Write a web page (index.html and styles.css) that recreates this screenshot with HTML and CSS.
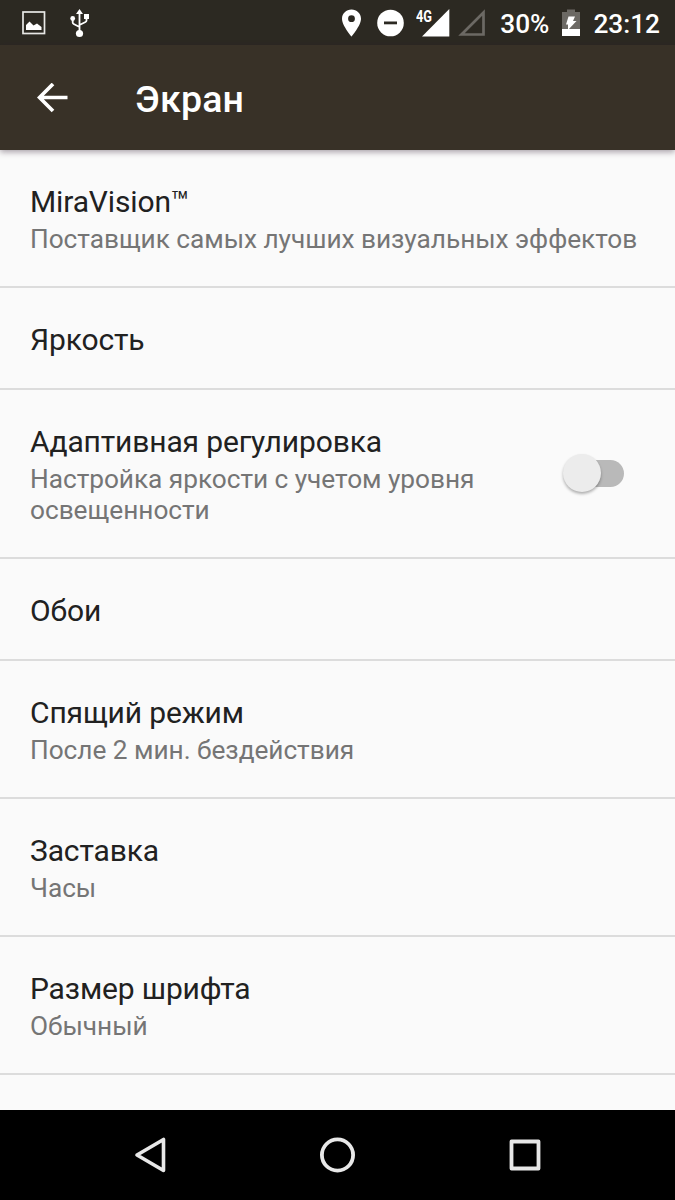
FILE: index.html
```html
<!DOCTYPE html>
<html lang="ru">
<head>
    <meta charset="UTF-8">
    <meta name="viewport" content="width=device-width, initial-scale=1.0">
    <title>Экран</title>
    <link rel="stylesheet" href="styles.css">
</head>
<body>
    <div class="status-bar">
        <div class="notifications">
            <svg class="icon-picture" width="24" height="24" viewBox="0 0 24 24">
                <rect x="1" y="1" width="21.5" height="21.5" fill="none" stroke="#e8e8e6" stroke-width="1.7"/>
                <path d="M4 19v-5l3.5-3.5 4 4 3.5-2 4.5 3.5v3z" fill="#fff"/>
            </svg>
            <svg class="icon-usb" width="20" height="30" viewBox="0 0 20 30">
                <path d="M9.5 5v20M2.7 11v3.5q0 1 1 1.5l5.8 3M16.5 8v4.5q0 1-1 1.5l-6 3" fill="none" stroke="#fff" stroke-width="1.8"/>
                <path d="M9.5 1l3.5 5h-7zM14 6h5v5h-5z" fill="#fff"/>
                <circle cx="2.7" cy="10.5" r="2.4" fill="#fff"/>
                <circle cx="9.5" cy="25.5" r="3.6" fill="#fff"/>
            </svg>
        </div>
        <div class="system-icons">
            <svg class="icon-location" width="20" height="28" viewBox="0 0 20 28">
                <path d="M9.5 0.5C4.3 0.5 0 4.5 0 9.7 0 16.5 9.5 27.5 9.5 27.5S19 16.5 19 9.7C19 4.5 14.7 0.5 9.5 0.5zM9.5 6.3a3.4 3.4 0 1 1 0 6.8 3.4 3.4 0 0 1 0-6.8z" fill="#fff"/>
            </svg>
            <svg class="icon-dnd" width="28" height="28" viewBox="0 0 28 28">
                <circle cx="13.5" cy="14" r="13.3" fill="#fff"/>
                <rect x="7" y="12.5" width="13" height="2.8" fill="#2c2922"/>
            </svg>
            <div class="signal">
                <span class="network">4G</span>
                <svg width="28" height="28" viewBox="0 0 28 28">
                    <path d="M27.3 0v27.5H0z" fill="#fff"/>
                </svg>
            </div>
            <svg class="icon-no-signal" width="28" height="28" viewBox="0 0 28 28">
                <path d="M25.5 3.5v22H3.5z" fill="none" stroke="#6c6964" stroke-width="2.7"/>
            </svg>
            <span class="percent">30%</span>
            <svg class="icon-battery" width="18" height="28" viewBox="0 0 18 28">
                <path d="M5 0.5h8v2.5h5v17H0V3h5z" fill="#6c6964"/>
                <path d="M0 20h18v7H0z" fill="#fff"/>
                <path d="M6.5 7.5h6.5l-2 4.5h3.5l-8.500 9v-5.500h-2z" fill="#fff"/>
            </svg>
            <span class="clock">23:12</span>
        </div>
    </div>

    <div class="app-bar">
        <svg class="back" width="32" height="30" viewBox="0 0 32 30">
            <path d="M30.5 14.500H2.500M16 1L2.500 14.500 16 28" fill="none" stroke="#fff" stroke-width="3.7"/>
        </svg>
        <h1>Экран</h1>
    </div>

    <div class="settings">
        <div class="item">
            <div class="title">MiraVision™</div>
            <div class="summary">Поставщик самых лучших визуальных эффектов</div>
        </div>
        <div class="item">
            <div class="title">Яркость</div>
        </div>
        <div class="item with-switch">
            <div class="text">
                <div class="title">Адаптивная регулировка</div>
                <div class="summary">Настройка яркости с учетом уровня освещенности</div>
            </div>
            <div class="switch"><div class="thumb"></div></div>
        </div>
        <div class="item">
            <div class="title">Обои</div>
        </div>
        <div class="item">
            <div class="title">Спящий режим</div>
            <div class="summary">После 2 мин. бездействия</div>
        </div>
        <div class="item">
            <div class="title">Заставка</div>
            <div class="summary">Часы</div>
        </div>
        <div class="item">
            <div class="title">Размер шрифта</div>
            <div class="summary">Обычный</div>
        </div>
    </div>

    <div class="nav-bar">
        <svg width="40" height="40" viewBox="0 0 40 40">
            <path d="M33.5 4.500v31L7 20z" fill="none" stroke="#e8e8e8" stroke-width="3.6" stroke-linejoin="round"/>
        </svg>
        <svg width="40" height="40" viewBox="0 0 40 40">
            <circle cx="19.5" cy="20" r="15.6" fill="none" stroke="#e8e8e8" stroke-width="3.8"/>
        </svg>
        <svg width="40" height="40" viewBox="0 0 40 40">
            <rect x="6.5" y="6.5" width="27" height="27" fill="none" stroke="#e8e8e8" stroke-width="3.8" stroke-linejoin="round"/>
        </svg>
    </div>
</body>
</html>
```
FILE: styles.css
```css
* {
    box-sizing: border-box;
}

body {
    margin: 0;
    height: 1200px;
    display: flex;
    flex-direction: column;
    overflow: hidden;
    background-color: #fafafa;
    font-family: Roboto, sans-serif;
}

svg {
    display: block;
    flex-shrink: 0;
}

.status-bar {
    height: 45px;
    flex-shrink: 0;
    display: flex;
    justify-content: space-between;
    padding: 0 15px 0 22px;
    background-color: #2c2922;
    color: #fff;
}

.notifications,
.system-icons {
    display: flex;
    align-items: center;
}

.icon-usb {
    margin-left: 24px;
}

.icon-dnd {
    margin-left: 15px;
}

.signal {
    position: relative;
    margin-left: 17px;
}

.network {
    position: absolute;
    left: -6px;
    top: 0;
    font-size: 16px;
    line-height: 16px;
    font-weight: 700;
    transform: scaleX(0.8);
    transform-origin: left;
}

.icon-no-signal {
    margin-left: 8px;
}

.percent,
.clock {
    font-size: 26.25px;
    font-weight: 500;
    line-height: 45px;
    padding-top: 3px;
}

.percent {
    margin-left: 14px;
}

.icon-battery {
    margin-left: 13px;
}

.clock {
    margin-left: 13px;
}

.app-bar {
    height: 105px;
    flex-shrink: 0;
    display: flex;
    align-items: center;
    padding-left: 37px;
    background-color: #383127;
    box-shadow: 0 2px 6px rgba(40, 20, 40, 0.4);
    z-index: 1;
}

.app-bar h1 {
    margin: 3px 0 0 66px;
    color: #fff;
    font-size: 37.5px;
    font-weight: 500;
    letter-spacing: 0.2px;
    line-height: 43px;
}

.settings {
    flex: 1;
    overflow: hidden;
}

.item {
    padding: 34px 30px 31px;
    border-bottom: 2px solid #dcdcdc;
}

.title {
    color: #212121;
    font-size: 30px;
    letter-spacing: -0.14px;
    line-height: 35px;
}

.summary {
    margin: 5px 0 0;
    color: #757575;
    font-size: 26.25px;
    letter-spacing: -0.04px;
    line-height: 31px;
}

.with-switch {
    display: flex;
    align-items: center;
    justify-content: space-between;
}

.with-switch .text {
    width: 470px;
}

.switch {
    width: 54px;
    height: 27px;
    margin: -3px 21px 0 0;
    border-radius: 14px;
    background-color: #b9b9b9;
}

.thumb {
    width: 38px;
    height: 38px;
    margin: -6px 0 0 -7px;
    border-radius: 50%;
    background-color: #ececec;
    box-shadow: 0 2px 3px rgba(0, 0, 0, 0.3);
}

.nav-bar {
    height: 90px;
    flex-shrink: 0;
    display: flex;
    align-items: center;
    justify-content: center;
    gap: 147.5px;
    background-color: #000;
}
```
